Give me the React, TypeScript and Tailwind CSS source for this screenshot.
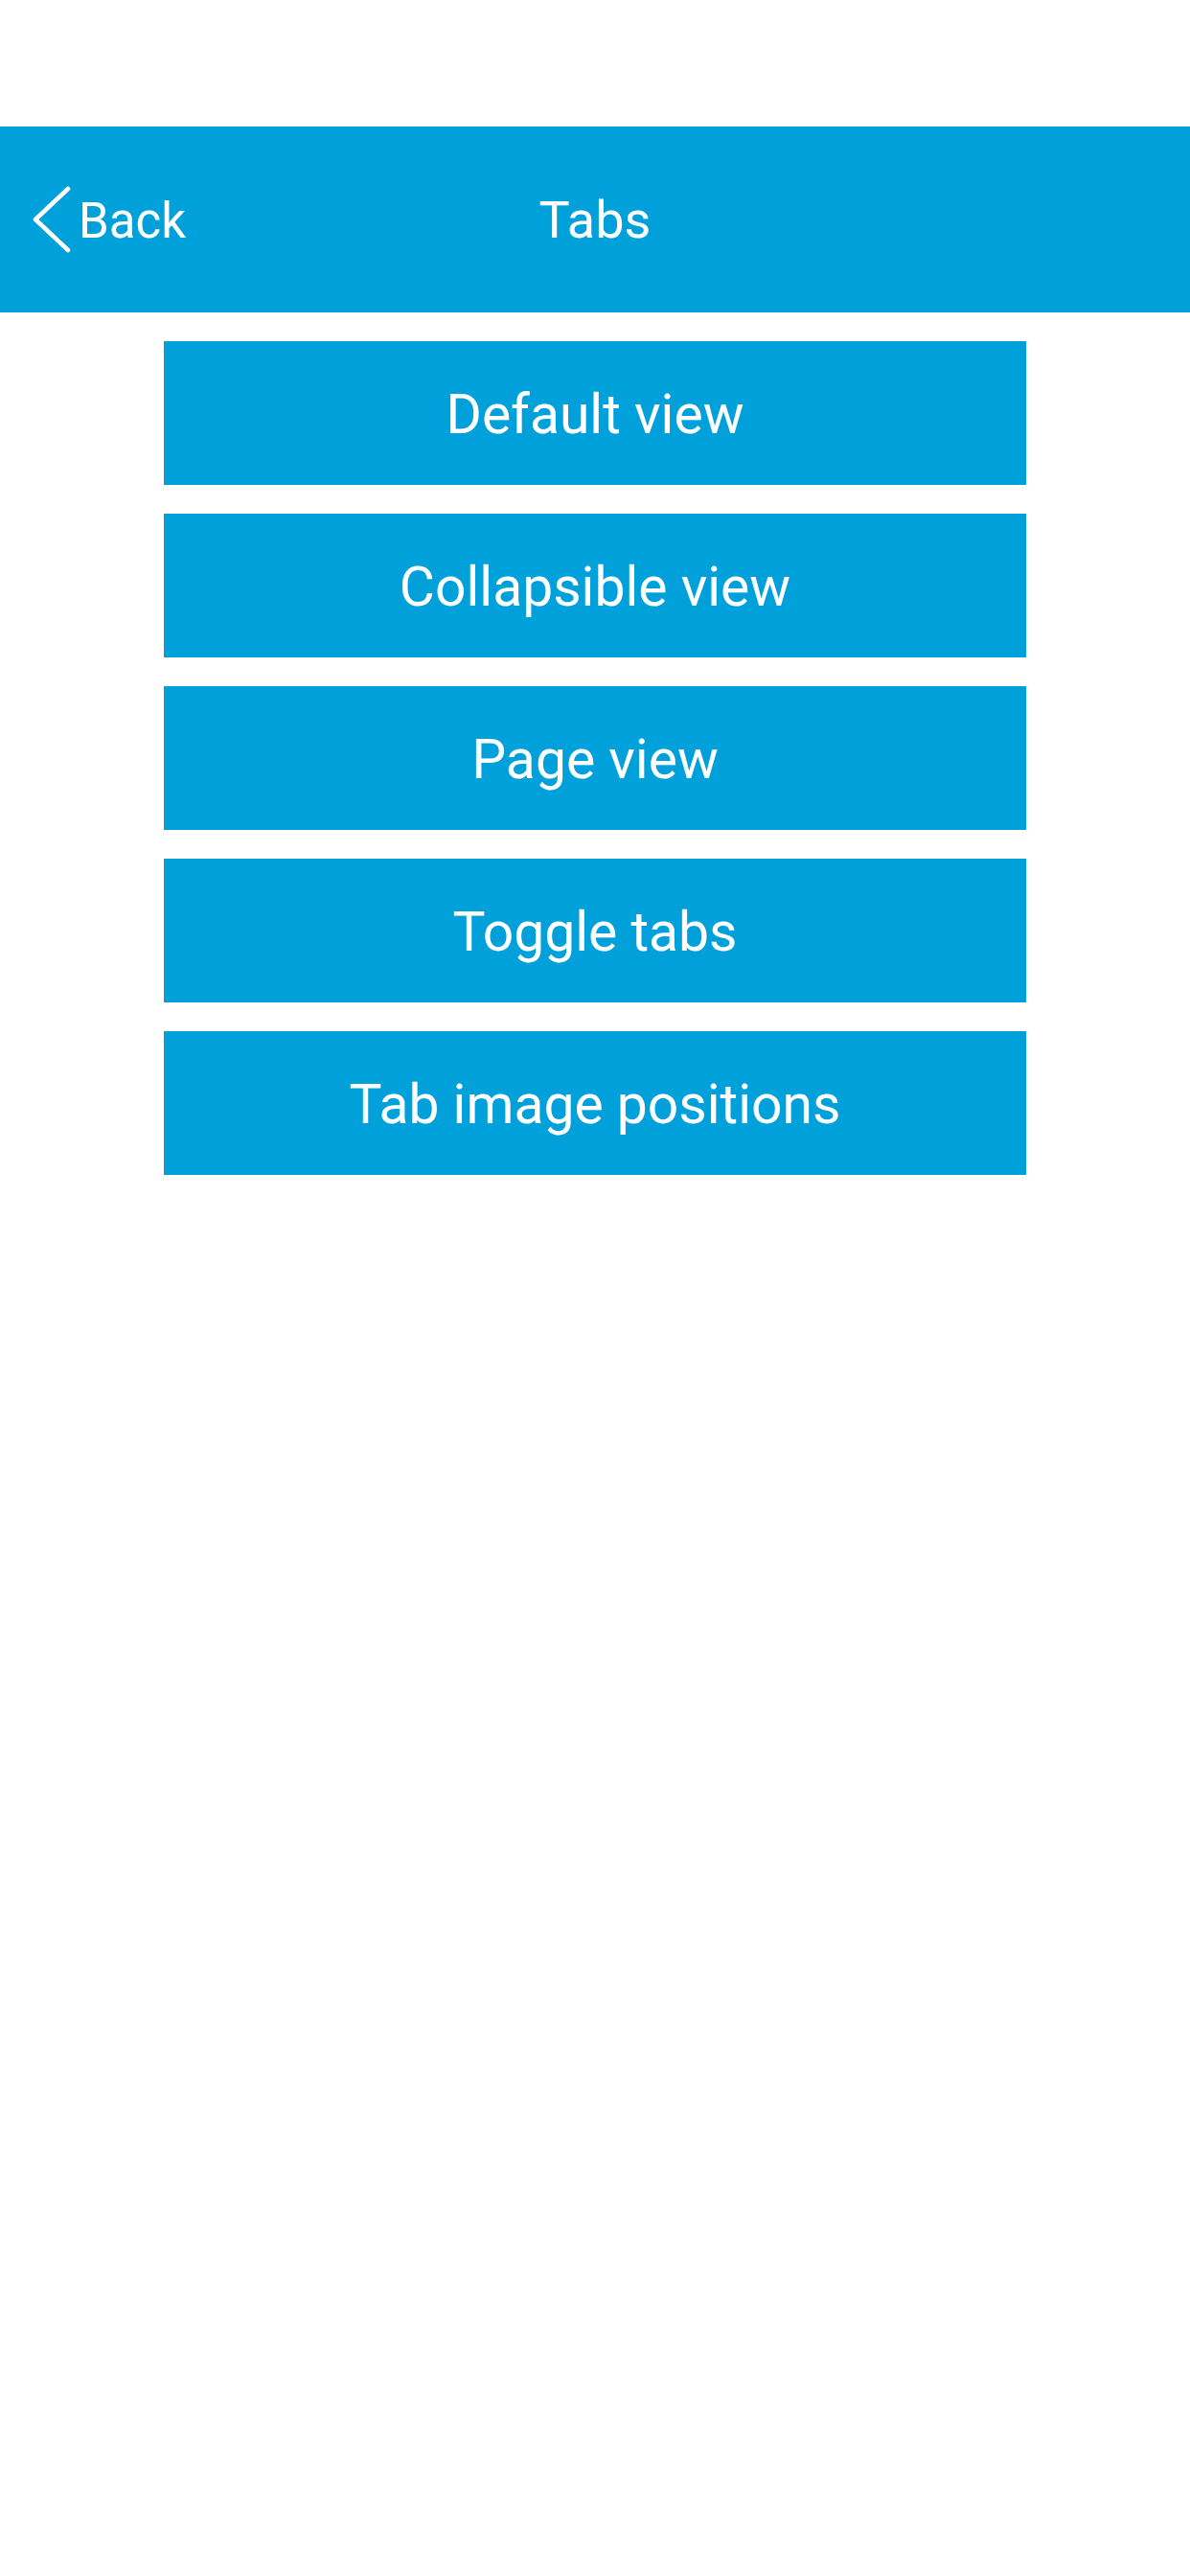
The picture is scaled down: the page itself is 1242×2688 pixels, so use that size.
const items = ['Default view', 'Collapsible view', 'Page view', 'Toggle tabs', 'Tab image positions'];

export default function App() {
  return (
    <div className="min-h-screen w-full bg-white" style={{ fontFamily: 'Roboto, "Noto Sans", sans-serif' }}>
      {/* status bar space */}
      <div className="h-[132px]" />

      <header className="relative flex h-[194px] items-center justify-center bg-[#00a0db]">
        <div className="absolute left-[32px] top-0 flex h-full items-center">
          <svg width="42" height="72" viewBox="0 0 42 72" fill="none" className="mr-[8px]">
            <path d="M39 4 L5 36 L39 68" stroke="white" strokeWidth="4.5" strokeLinecap="round" strokeLinejoin="round" />
          </svg>
          <span className="pt-[2px] text-[51px] leading-none text-white">Back</span>
        </div>
        <h1 className="pt-[2px] text-[54px] leading-none text-white">Tabs</h1>
      </header>

      <div className="mt-[30px] flex flex-col items-center gap-[30px]">
        {items.map((label) => (
          <button
            key={label}
            className="flex h-[150px] w-[900px] items-center justify-center bg-[#00a0db] pt-[3px] text-[57px] leading-none text-white"
          >
            {label}
          </button>
        ))}
      </div>
    </div>
  );
}
